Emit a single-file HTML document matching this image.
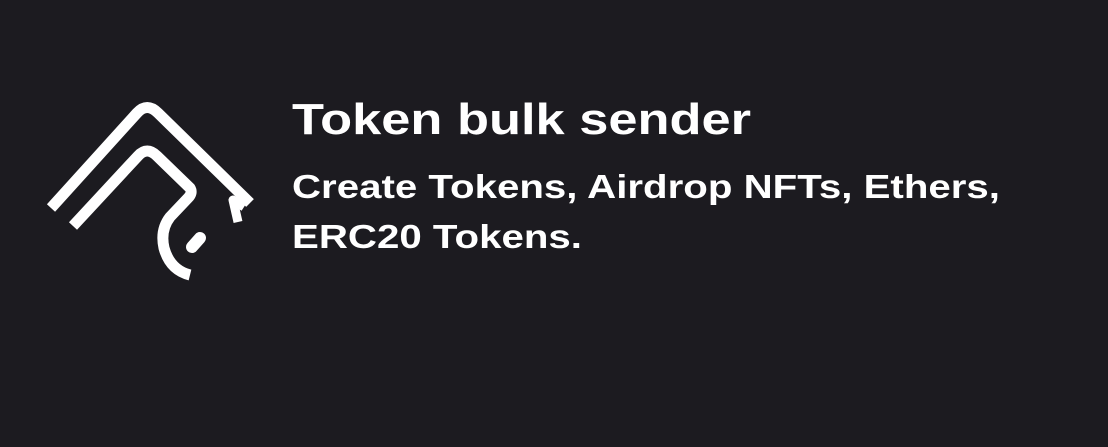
<!DOCTYPE html>
<html><head><style>
html,body{margin:0;padding:0;background:#1c1b20;width:1108px;height:447px;overflow:hidden}
svg{display:block}
text{font-family:"Liberation Sans",sans-serif;font-weight:bold;fill:#fff}
</style></head><body>
<svg width="1108" height="447" viewBox="0 0 1108 447">
<g fill="none" stroke="#fff" stroke-width="11" stroke-linejoin="round">
<path d="M51 208 L137 113 Q147 102 158 113 L250 203" stroke-linecap="butt"/>
<path d="M238 222 L233 200 L244 207" stroke-width="9"/>
<path d="M73 226 L138 156 Q147 146 157 156 L190 188 Q193 193 188 198 L170 217 Q160 230 164 248 Q170 270 190 275" stroke-linecap="butt"/>
<path d="M192 247 L200 238" stroke-width="12" stroke-linecap="round"/>
</g>
<text x="292" y="134" font-size="44" textLength="459" lengthAdjust="spacingAndGlyphs">Token bulk sender</text>
<text x="292" y="198" font-size="33" textLength="708" lengthAdjust="spacingAndGlyphs">Create Tokens, Airdrop NFTs, Ethers,</text>
<text x="292" y="248" font-size="33" textLength="290" lengthAdjust="spacingAndGlyphs">ERC20 Tokens.</text>
</svg>
</body></html>
